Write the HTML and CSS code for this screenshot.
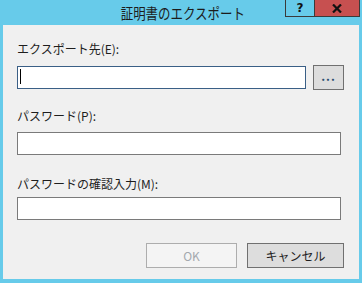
FILE: index.html
```html
<!DOCTYPE html>
<html lang="ja">

<head>
    <meta charset="UTF-8">
    <title>証明書のエクスポート</title>
    <link rel="stylesheet" href="styles.css">
</head>

<body>
    <div class="window">
        <div class="titlebar">
            <span class="title">証明書のエクスポート</span>
            <div class="controls">
                <div class="ctl help">?</div>
                <div class="ctl close">
                    <svg width="10" height="9" viewBox="0 0 10 9">
                        <path d="M1 0.5 L9 8.5 M9 0.5 L1 8.5" stroke="#111" stroke-width="2.2" fill="none"/>
                    </svg>
                </div>
            </div>
        </div>
        <div class="client">
            <div class="label l1">エクスポート先(E):</div>
            <div class="row">
                <div class="field wide focused"><span class="caret"></span></div>
                <div class="btn browse">...</div>
            </div>
            <div class="label l2">パスワード(P):</div>
            <div class="field"></div>
            <div class="label l3">パスワードの確認入力(M):</div>
            <div class="field"></div>
            <div class="actions">
                <div class="btn ok disabled">OK</div>
                <div class="btn cancel">キャンセル</div>
            </div>
        </div>
    </div>
</body>

</html>
```

FILE: styles.css
```css
* {
    margin: 0;
    padding: 0;
    box-sizing: border-box;
}

body {
    font-family: "Noto Sans CJK JP", "Noto Sans", sans-serif;
    background-color: #67cbea;
    width: 362px;
    height: 283px;
    overflow: hidden;
}

.window {
    width: 362px;
    height: 283px;
    padding: 0 3px 4px 3px;
    display: flex;
    flex-direction: column;
}

.titlebar {
    position: relative;
    height: 25px;
    text-align: center;
}

.title {
    display: inline-block;
    font-size: 15px;
    line-height: 22px;
    color: #1c1c1c;
    margin-left: 4px;
    transform: scaleX(0.83);
}

.controls {
    position: absolute;
    top: 0;
    right: -1px;
    display: flex;
}

.ctl {
    height: 17px;
    border: 1px solid #3a3a3a;
    border-top: none;
    display: flex;
    align-items: center;
    justify-content: center;
}

.help {
    width: 29px;
    font-family: "DejaVu Sans", sans-serif;
    font-weight: bold;
    font-size: 12px;
    color: #111;
    border-right: none;
}

.close {
    width: 46px;
    background-color: #c75050;
}

.client {
    flex: 1;
    background-color: #f0f0f0;
    padding: 16px 15px 0 14px;
    display: flex;
    flex-direction: column;
}

.label {
    font-size: 12px;
    line-height: 16px;
    color: #1e1e1e;
}

.l1 {
    margin-bottom: 8px;
}

.l2 {
    margin-top: 18px;
    margin-bottom: 8px;
}

.l3 {
    margin-top: 21px;
    margin-bottom: 5px;
}

.row {
    display: flex;
    align-items: center;
    gap: 7px;
}

.field {
    height: 23px;
    width: 324px;
    background-color: #fff;
    border: 1px solid #7a7a7a;
    position: relative;
}

.field.wide {
    width: 289px;
}

.field.focused {
    border-color: #3a5f86;
}

.caret {
    position: absolute;
    left: 2px;
    top: 2px;
    width: 1px;
    height: 15px;
    background-color: #000;
}

.btn {
    height: 25px;
    background-color: #dddddd;
    border: 1px solid #707070;
    font-size: 12px;
    color: #1e1e1e;
    display: flex;
    align-items: center;
    justify-content: center;
}

.browse {
    width: 31px;
    font-weight: bold;
    color: #2a4d70;
    padding-bottom: 4px;
    letter-spacing: 1px;
}

.actions {
    display: flex;
    justify-content: flex-end;
    gap: 10px;
    margin-top: 23px;
}

.ok {
    width: 91px;
}

.disabled {
    background-color: #f4f4f4;
    border-color: #adadad;
    color: #a3a8ae;
}

.cancel {
    width: 97px;
}
```
